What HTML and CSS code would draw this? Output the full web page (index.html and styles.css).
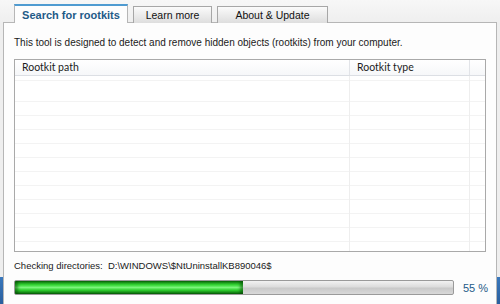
FILE: index.html
```html
<!DOCTYPE html>
<html lang="en">
<head>
	<meta charset="UTF-8">
	<title>Rootkit scanner</title>
	<link rel="stylesheet" href="styles.css">
</head>
<body>

<div class="tabs">
	<div class="tab active">Search for rootkits</div>
	<div class="tab">Learn more</div>
	<div class="tab wide">About &amp; Update</div>
</div>

<div class="panel">
	<p class="intro">This tool is designed to detect and remove hidden objects (rootkits) from your computer.</p>

	<div class="list">
		<div class="list-head">
			<div class="col col-path">Rootkit path</div>
			<div class="col col-type">Rootkit type</div>
			<div class="col col-rest"></div>
		</div>
		<div class="list-body">
			<div class="col col-path"></div>
			<div class="col col-type"></div>
			<div class="col col-rest"></div>
		</div>
	</div>

	<p class="status">Checking directories:&nbsp; D:\WINDOWS\$NtUninstallKB890046$</p>

	<div class="progress-row">
		<div class="progress">
			<div class="progress-fill" style="width:52%"></div>
		</div>
		<span class="percent">55 %</span>
	</div>
</div>

</body>
</html>
```

FILE: styles.css
```css
body {
	margin: 0;
	height: 304px;
	overflow: hidden;
	font-family: "Liberation Sans", Arial, sans-serif;
	font-size: 10px;
	color: #1a1a1a;
	background:
		linear-gradient(#3a78bd, #2a5f9e) 0 277px / 3px 27px no-repeat,
		linear-gradient(#3a78bd, #2a5f9e) 497px 277px / 3px 27px no-repeat,
		linear-gradient(#f7f7f7, #eeeeee 24px, #eeeeee);
}

.tabs {
	display: flex;
	align-items: flex-end;
	gap: 5px;
	height: 23px;
	padding-left: 14px;
	margin-bottom: -1px;
	position: relative;
	z-index: 1;
}

.tab {
	box-sizing: border-box;
	width: 79px;
	height: 17px;
	line-height: 16px;
	text-align: center;
	border: 1px solid #a7a7a7;
	border-bottom: none;
	background: linear-gradient(#fbfbfb, #ececec 50%, #dedede);
	color: #111;
	font-size: 10.5px;
}

.tab.wide {
	width: 111px;
}

.tab.active {
	width: 114px;
	height: 19px;
	line-height: 18px;
	border-color: #b6b6b6;
	border-top: 2px solid #4f9bd1;
	background: #fdfdfd;
	color: #1f5b88;
	font-weight: bold;
	font-size: 11px;
}

.panel {
	box-sizing: border-box;
	width: 494px;
	height: 300px;
	margin-left: 3px;
	padding: 0 10px;
	border: 1px solid #b6b6b6;
	background: #fdfdfd;
}

.intro {
	margin: 13px 0 10px 0;
	line-height: 13px;
}

.list {
	box-sizing: border-box;
	height: 193px;
	display: flex;
	flex-direction: column;
	border: 1px solid #a9a9a9;
	background: #fff;
}

.list-head {
	display: flex;
	height: 15px;
	border-bottom: 1px solid #dcdfe4;
	background: linear-gradient(#ffffff, #f6f7f9);
	font-family: Lato, "Open Sans", sans-serif;
	font-size: 10.5px;
	line-height: 15px;
	color: #1c1c1c;
}

.list-body {
	flex: 1;
	display: flex;
	background: repeating-linear-gradient(#fff 0, #fff 13px, #f3f3f3 13px, #f3f3f3 14px);
	background-position: 0 12px;
}

.col {
	box-sizing: border-box;
	border-right: 1px solid #eeeeee;
}

.list-head .col {
	border-right-color: #e2e4e8;
}

.col-path {
	width: 335px;
	padding-left: 7px;
}

.col-type {
	width: 120px;
	padding-left: 7px;
}

.col-rest {
	flex: 1;
	border-right: none;
}

.status {
	margin: 7px 0 8px 0;
	font-size: 9.5px;
	line-height: 13px;
}

.progress-row {
	display: flex;
	align-items: center;
	gap: 9px;
}

.progress {
	box-sizing: border-box;
	flex-shrink: 0;
	width: 440px;
	height: 15px;
	border: 1px solid #9a9a9a;
	border-radius: 2px;
	background: linear-gradient(#f2f2f2, #dcdcdc 45%, #c9c9c9 55%, #d8d8d8);
	overflow: hidden;
}

.progress-fill {
	height: 100%;
	background: linear-gradient(#0c7d0c, #35d635 30%, #7cf57c 50%, #2ecf2e 70%, #0b6e0b);
	box-shadow: inset 3px 0 3px rgba(0, 60, 0, 0.5), inset -3px 0 3px rgba(0, 60, 0, 0.5);
}

.percent {
	white-space: nowrap;
	font-size: 11px;
	color: #1f5b88;
}
```
